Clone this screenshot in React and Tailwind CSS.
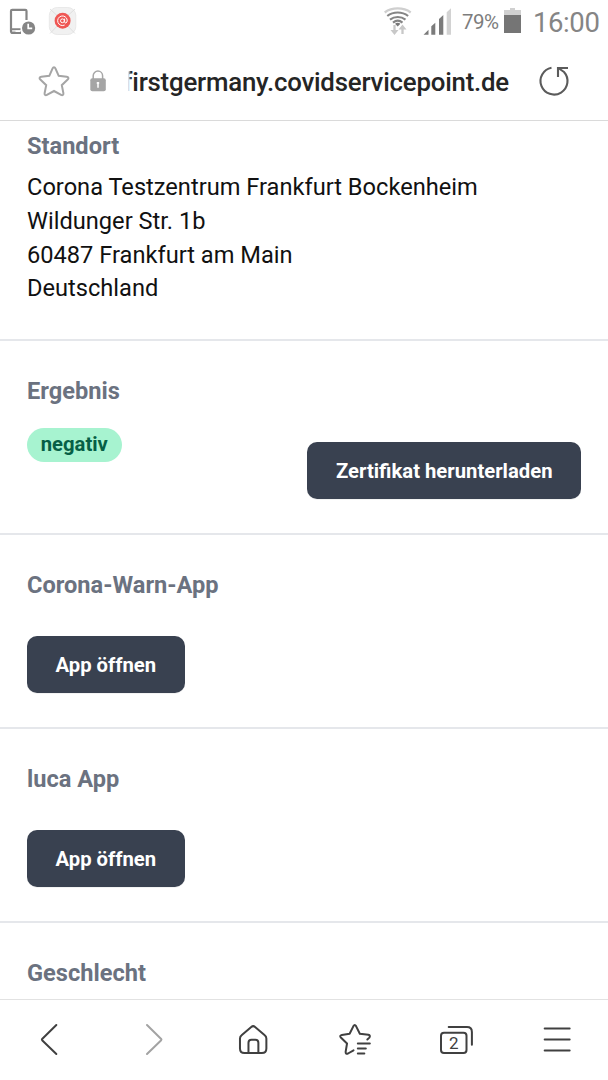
import React from "react";

const STAR =
  "M16 2.2c.7 0 1.1.5 1.4 1.2l3.3 7.4 8 1c1.8.2 2.3 1.6 1 2.8l-5.9 5.6 1.6 8c.3 1.6-.9 2.5-2.3 1.7L16 26l-7.1 3.9c-1.4.8-2.6-.1-2.3-1.7l1.6-8-5.9-5.6c-1.3-1.2-.8-2.6 1-2.8l8-1 3.3-7.4c.3-.7.7-1.2 1.4-1.2z";

function StatusBar() {
  return (
    <div className="flex h-11 shrink-0 items-start text-[#7d7d7d]">
      <svg className="ml-2 mt-2 shrink-0" width="28" height="28" viewBox="8 8 28 28" fill="none">
        <path d="M26.500 20V11q0-1.200-1.200-1.200H12.200q-1.200 0-1.200 1.200V31.500q0 1.300 1.200 1.300H21" stroke="#858585" strokeWidth="2.200" />
        <path d="M11 29.300h9.500M11 32.700h10" stroke="#858585" strokeWidth="2" />
        <path d="M15.500 31.200h4.500" stroke="#fff" strokeWidth="1.600" />
        <circle cx="28.600" cy="28" r="6.600" fill="#858585" />
        <path d="M28.200 23.800v4.600h4" stroke="#fff" strokeWidth="1.700" />
      </svg>
      <svg className="ml-3 mt-[7px] shrink-0" width="29" height="29" viewBox="48 7 29 29" fill="none">
        <rect x="49.300" y="7.500" width="26.500" height="27" rx="8" fill="#f1f1f1" stroke="#e9e9e9" />
        <path d="M50 9l12.500 11.500L75 9M50 33.500l12.500-13L75 33.500" stroke="#d9d9d9" strokeWidth=".8" />
        <circle cx="62.600" cy="20.700" r="8" fill="#ef5754" />
        <circle cx="62.400" cy="20.800" r="1.900" stroke="#fff" strokeWidth="1" />
        <path d="M64.600 18.600v3q0 1.700 1.300 1.400 1.500-.5 1.300-3a4.800 4.800 0 1 0-2.500 5" stroke="#fff" strokeWidth="1" />
      </svg>
      <svg className="ml-[305px] mt-1.5 shrink-0" width="32" height="30" viewBox="382 6 32 30" fill="none">
        <path d="M384.700 12.400c7.400-5.300 18.600-5.300 26 0" stroke="#cfcfcf" strokeWidth="2.400" />
        <path d="M387.300 16c6-4.700 14.800-4.700 20.800 0M390 19.600c4.500-3.500 11-3.500 15.500 0M393 22.600c2.800-2.200 6.700-2.200 9.500 0" stroke="#858585" strokeWidth="2.200" />
        <path d="M395 23.800q2.700-2 5.400 0l-2.700 2.700z" fill="#777" />
        <path d="M394.500 25v6M402.500 34v-6" stroke="#c8c8c8" strokeWidth="2.300" />
        <path d="M390.500 30h8l-4 5zM398.500 29.500l4-5 4 5z" fill="#c8c8c8" />
      </svg>
      <svg className="ml-2 mt-2 shrink-0" width="30" height="28" viewBox="422 8 30 28">
        <path d="M423.500 34.700l5-5v5z M431.300 26.300l4-3.500v11.900h-4z M439 19l4.300-4v19.700H439z" fill="#7b7b7b" />
        <path d="M446.700 12.200l4.300-4v26.500h-4.300z" fill="#d2d2d2" />
      </svg>
      <div className="ml-2.5 mt-2 w-[40px] text-[20.5px] leading-[28px] tracking-[-0.5px]">79%</div>
      <svg className="ml-0.5 mt-[7px] shrink-0" width="18" height="27" viewBox="504 7 18 27">
        <path d="M510 8h5v2h6v6h-17v-6h6z" fill="#d0d0d0" />
        <path d="M504 15h17v18h-17z" fill="#757575" />
      </svg>
      <div className="ml-[11px] mt-[7px] text-[27.5px] font-normal leading-[32px] tracking-[-0.4px] whitespace-nowrap text-[#858585]">16:00</div>
    </div>
  );
}

function AddressBar() {
  return (
    <div className="flex h-[77px] shrink-0 items-center border-b border-[#dadada] pb-0.5 pl-[37px]">
      <svg className="shrink-0" width="34" height="34" viewBox="-1 -1 34 34" fill="none">
        <path d={STAR} stroke="#a5a5a5" strokeWidth="2" />
      </svg>
      <svg className="ml-[18px] shrink-0" width="18" height="24" viewBox="89 69 18 24" fill="none">
        <path d="M93.200 79v-3.200a4.700 4.700 0 0 1 9.400 0V79" stroke="#a7a7a7" strokeWidth="1.500" />
        <rect x="90.300" y="78.200" width="15.500" height="13" rx="2" fill="#a5a5a5" />
        <path d="M96.700 83h2.500M98 82v5.700" stroke="#fff" strokeWidth="1.500" />
      </svg>
      <div className="relative ml-[21px] mt-px flex w-[381px] justify-end overflow-hidden text-[25.8px] font-medium leading-[36px] tracking-[-0.2px] text-[#252525]">
        <span className="whitespace-nowrap">firstgermany.covidservicepoint.de</span>
        <span className="absolute inset-y-0 left-0 w-[3px] bg-gradient-to-r from-white to-transparent" />
      </div>
      <svg className="ml-7 shrink-0" width="34" height="34" viewBox="537 64 34 34" fill="none" stroke="#5b5b5b" strokeWidth="2.100">
        <path d="M551.500 67.800A13.500 13.500 0 1 0 564 72L559 68.500" />
        <path d="M568 68h-10V77" />
      </svg>
    </div>
  );
}

function Heading({ children }) {
  return <h2 className="text-[23.6px] font-bold leading-[34px] text-[#6b7280]">{children}</h2>;
}

function Button({ children }) {
  return (
    <button className="flex h-[57px] items-center rounded-[10px] bg-[#394150] px-[28.5px] pt-px text-[20.25px] font-bold text-white shadow-2xs">
      {children}
    </button>
  );
}

function AppSection({ title }) {
  return (
    <section className="h-[194px] shrink-0 border-b-2 border-[#e5e7eb] px-[27px] pt-[33px]">
      <Heading>{title}</Heading>
      <div className="mt-[34px] flex">
        <Button>App öffnen</Button>
      </div>
    </section>
  );
}

function NavIcon({ x, children }) {
  return (
    <svg
      className="justify-self-center"
      width="38"
      height="38"
      viewBox={`${x} 1021 38 38`}
      fill="none"
      stroke="currentColor"
      strokeWidth="2"
      strokeLinecap="round"
      strokeLinejoin="round"
    >
      {children}
    </svg>
  );
}

function BottomBar() {
  return (
    <nav className="grid h-[81px] shrink-0 grid-cols-6 items-center border-t border-[#e2e2e2] text-[#404040]">
      <NavIcon x={31.67}>
        <path d="M56 1025l-14.200 14q-.5.600 0 1.200L56 1054" />
      </NavIcon>
      <NavIcon x={133}>
        <path stroke="#a3a3a3" d="M147 1025l14.200 14q.5.600 0 1.200L147 1054" />
      </NavIcon>
      <NavIcon x={234.33}>
        <path d="M240.300 1038.500q0-2 1.600-3.300l9.700-8.300q1.900-1.600 3.800 0l9.700 8.300q1.600 1.300 1.600 3.300v10q0 4.500-4.500 4.500h-17.400q-4.500 0-4.500-4.500z" />
        <path d="M248.800 1053v-10.200q0-3 3-3h3.900q3 0 3 3v10.200" />
      </NavIcon>
      <NavIcon x={335.67}>
        <path d="M367 1039.500l2-1.900q1.500-2.200-1-2.800l-8.500-1.100-3.800-7.600q-1.300-2.200-2.600 0l-3.800 7.600-7.800 1.200q-2.600.7-1 2.600l6.200 6-1.400 8.400q0 2.600 2.400 1.600l5.500-3.200" />
        <path d="M357.500 1043.500H369.500M357.500 1048.500h8M357.500 1053.500h6.500" />
      </NavIcon>
      <NavIcon x={437}>
        <rect x="441" y="1032.700" width="25.500" height="20.300" rx="3" />
        <path d="M448.700 1027h18.300q4.900 0 4.900 4.900v12.800" />
        <text x="453.800" y="1048.800" textAnchor="middle" fontSize="17" fill="currentColor" stroke="none">2</text>
      </NavIcon>
      <NavIcon x={538.33}>
        <path d="M545 1028.500h25M545 1039.500h25M545 1050.500h25" />
      </NavIcon>
    </nav>
  );
}

export default function App() {
  return (
    <div className="flex h-[1080px] w-[608px] flex-col overflow-hidden bg-white font-['Roboto',sans-serif]">
      <StatusBar />
      <AddressBar />
      <main className="flex min-h-0 flex-1 flex-col overflow-hidden">
        <section className="h-[220px] shrink-0 border-b-2 border-[#e5e7eb] px-[27px] pt-[8px]">
          <Heading>Standort</Heading>
          <p className="mt-[8px] text-[23.63px] leading-[33.75px] text-[#111111]">
            Corona Testzentrum Frankfurt Bockenheim
            <br />
            Wildunger Str. 1b
            <br />
            60487 Frankfurt am Main
            <br />
            Deutschland
          </p>
        </section>
        <section className="h-[194px] shrink-0 border-b-2 border-[#e5e7eb] px-[27px] pt-[33px]">
          <Heading>Ergebnis</Heading>
          <div className="mt-5 flex items-start justify-between">
            <span className="flex h-[33.5px] items-center rounded-full bg-[#a7f3d0] px-[13.7px] pb-px text-[20.25px] font-bold text-[#065f46]">negativ</span>
            <div className="mt-3.5">
              <Button>Zertifikat herunterladen</Button>
            </div>
          </div>
        </section>
        <AppSection title="Corona-Warn-App" />
        <AppSection title="luca App" />
        <section className="shrink-0 px-[27px] pt-[33px]">
          <Heading>Geschlecht</Heading>
        </section>
      </main>
      <BottomBar />
    </div>
  );
}
